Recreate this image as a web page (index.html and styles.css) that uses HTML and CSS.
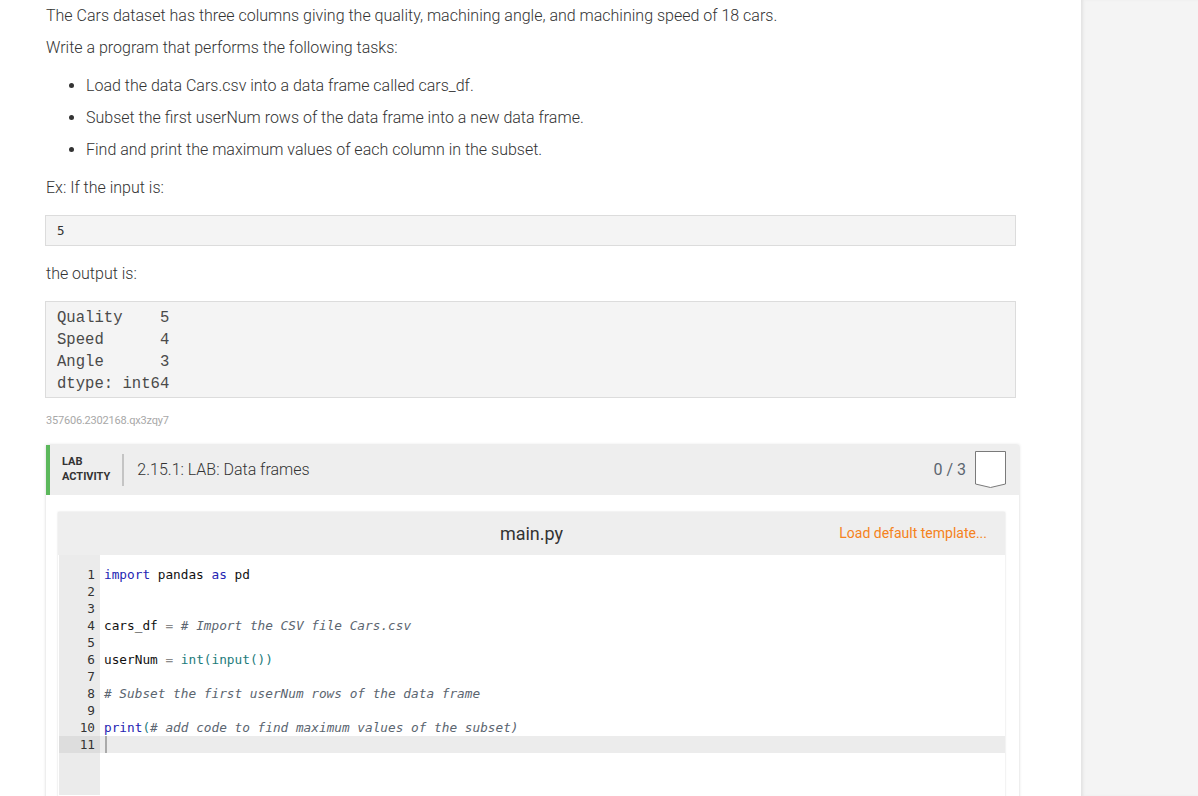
FILE: index.html
```html
<!DOCTYPE html>
<html>
<head>
<meta charset="utf-8">
<link rel="stylesheet" href="styles.css">
</head>
<body>
<div class="page">
  <main class="content">
    <p class="first">The Cars dataset has three columns giving the quality, machining angle, and machining speed of 18 cars.</p>
    <p class="second">Write a program that performs the following tasks:</p>
    <ul class="tasks">
      <li>Load the data Cars.csv into a data frame called cars_df.</li>
      <li>Subset the first userNum rows of the data frame into a new data frame.</li>
      <li>Find and print the maximum values of each column in the subset.</li>
    </ul>
    <p class="label">Ex: If the input is:</p>
    <pre class="sample input">5</pre>
    <p class="label">the output is:</p>
    <pre class="sample output">Quality    5
Speed      4
Angle      3
dtype: int64</pre>
    <div class="ident">357606.2302168.qx3zqy7</div>

    <section class="lab">
      <header class="lab-head">
        <div class="lab-tag">LAB<br>ACTIVITY</div>
        <div class="lab-divider"></div>
        <div class="lab-title">2.15.1: LAB: Data frames</div>
        <div class="lab-score">0 / 3</div>
        <svg class="shield" width="33" height="39" viewBox="0 0 33 39">
          <path d="M1.5 1.5 H31.5 V34 L16.5 37.5 L1.5 34 Z" fill="#fff" stroke="#7a7a7a" stroke-width="1"/>
        </svg>
      </header>
      <div class="lab-body">
        <div class="editor">
          <div class="editor-head">
            <span class="file-name">main.py</span>
            <span class="load-template">Load default template...</span>
          </div>
          <div class="code">
            <div class="gutter">
              <div>1</div><div>2</div><div>3</div><div>4</div><div>5</div><div>6</div><div>7</div><div>8</div><div>9</div><div>10</div><div class="active">11</div>
            </div>
            <div class="lines">
              <div class="ln"><span class="kw">import</span> pandas <span class="kw">as</span> pd</div>
              <div class="ln">&nbsp;</div>
              <div class="ln">&nbsp;</div>
              <div class="ln">cars_df <span class="op">=</span> <span class="cm"># Import the CSV file Cars.csv</span></div>
              <div class="ln">&nbsp;</div>
              <div class="ln">userNum <span class="op">=</span> <span class="bi">int(input())</span></div>
              <div class="ln">&nbsp;</div>
              <div class="ln"><span class="cm"># Subset the first userNum rows of the data frame</span></div>
              <div class="ln">&nbsp;</div>
              <div class="ln"><span class="kw">print</span><span class="bi">(</span><span class="cm"># add code to find maximum values of the subset)</span></div>
              <div class="ln active"><span class="cursor"></span></div>
            </div>
          </div>
        </div>
      </div>
    </section>
  </main>
  <aside class="side"></aside>
</div>
</body>
</html>
```

FILE: styles.css
```css
html, body {
  margin: 0;
  padding: 0;
  background: #fff;
}

body {
  font-family: Roboto, "Liberation Sans", sans-serif;
  color: #333;
  overflow: hidden;
  height: 796px;
}

.page {
  display: flex;
  height: 796px;
}

.content {
  width: 1035px;
  padding-left: 46px;
  flex: none;
  overflow: hidden;
}

.side {
  flex: 1;
  background: #f4f4f4;
  box-shadow: inset 3px 0 3px -1px #e2e2e2;
}

p {
  margin: 0;
  font-size: 16px;
  font-weight: 300;
  line-height: 22px;
  color: #333;
}

.first {
  padding-top: 5px;
}

.second {
  margin-top: 10px;
}

.tasks {
  margin: 16px 0 0 0;
  padding-left: 40px;
  font-size: 16px;
  font-weight: 300;
  line-height: 22px;
}

.tasks li {
  margin-bottom: 10px;
}

.tasks li:last-child {
  margin-bottom: 0;
}

.label {
  margin-top: 16px;
}

.input + .label {
  margin-top: 17px;
}

.sample {
  margin: 16px 0 0 -1px;
  width: 947px;
  background: #f4f4f4;
  border: 1px solid #dcdcdc;
  color: #333;
}

.input {
  font-family: "DejaVu Sans Mono", monospace;
  font-size: 12.5px;
  line-height: 15px;
  padding: 7px 11px;
}

.output {
  font-family: "Liberation Mono", "Courier New", monospace;
  font-size: 15.6px;
  line-height: 22px;
  padding: 5px 11px 2px;
  color: #4a4a4a;
}

.ident {
  margin-top: 17px;
  font-size: 11px;
  line-height: 12px;
  color: #a8a8a8;
  letter-spacing: -0.2px;
}

.lab {
  margin-top: 18px;
  width: 973px;
  background: #fff;
  box-shadow: 0 0 3px rgba(0, 0, 0, 0.18);
  height: 400px;
}

.lab-head {
  height: 50px;
  background: #eeeeee;
  border-left: 4px solid #5cb85c;
  display: flex;
  align-items: center;
  padding: 0 12px 0 12px;
}

.lab-tag {
  font-size: 11px;
  font-weight: 700;
  line-height: 15px;
  color: #333;
  margin-top: -3px;
}

.lab-divider {
  width: 2px;
  height: 32px;
  background: #c4c4c4;
  margin: 0 13px 0 12px;
}

.lab-title {
  font-size: 16px;
  font-weight: 300;
  color: #333;
  flex: 1;
  margin-top: -2px;
}

.lab-score {
  font-size: 16px;
  color: #5c6670;
  margin-right: 8px;
  margin-top: -2px;
}

.shield {
  display: block;
  margin-top: -2px;
}

.lab-body {
  padding: 17px 14px 0 12px;
}

.editor {
  box-shadow: 0 0 2px rgba(0, 0, 0, 0.15);
  background: #fff;
  height: 300px;
}

.editor-head {
  height: 43px;
  background: #eeeeee;
  position: relative;
  display: flex;
  align-items: center;
  justify-content: center;
}

.file-name {
  font-size: 18px;
  color: #333;
}

.load-template {
  position: absolute;
  right: 18px;
  top: 13px;
  font-size: 14px;
  color: #f58220;
}

.code {
  display: flex;
  font-family: "DejaVu Sans Mono", monospace;
  font-size: 12.75px;
  line-height: 17px;
}

.gutter {
  width: 41px;
  margin-left: 1px;
  background: #ebebeb;
  padding-top: 11px;
  text-align: right;
  color: #333;
  height: 240px;
  box-sizing: border-box;
}

.gutter div {
  padding-right: 5px;
}

.gutter .active {
  background: #dddddd;
}

.lines {
  flex: 1;
  padding-top: 11px;
  color: #111;
}

.ln {
  padding-left: 4px;
  white-space: pre;
  height: 17px;
}

.ln.active {
  background: #ececec;
}

.cursor {
  display: inline-block;
  width: 2px;
  height: 17px;
  background: #aaa;
  vertical-align: top;
  margin-left: 1px;
}

.kw {
  color: #2424b3;
}

.bi {
  color: #1d7b7b;
}

.op {
  color: #8a8a8a;
}

.cm {
  color: #5b6570;
  font-style: italic;
}
```
